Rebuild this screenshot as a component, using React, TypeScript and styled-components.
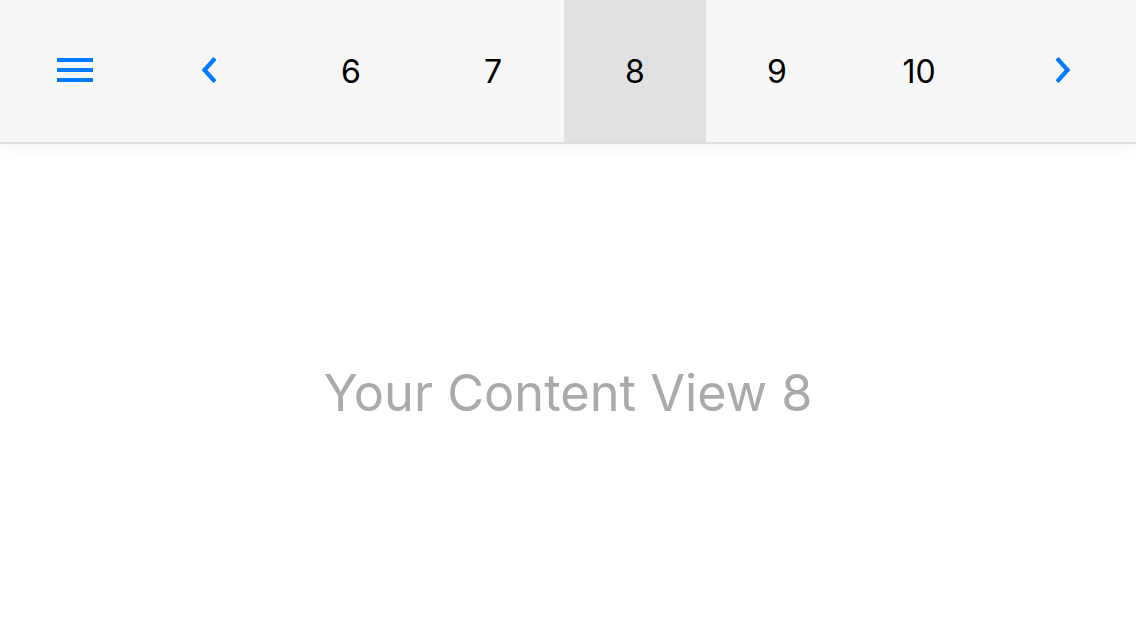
import React from "react";
import styled, { createGlobalStyle } from "styled-components";

const GlobalStyle = createGlobalStyle`
  html, body { margin: 0; padding: 0; background: #ffffff; }
  body { font-family: Inter, "Liberation Sans", Arial, sans-serif; }
  #root { height: 640px; }
`;

const Page = styled.div`
  height: 640px;
  display: flex;
  flex-direction: column;
  background: #ffffff;
`;

const Toolbar = styled.nav`
  display: flex;
  height: 142px;
  flex-shrink: 0;
  background: #f7f7f7;
  border-bottom: 2px solid #dedede;
  box-shadow: 0 4px 18px rgba(0, 0, 0, 0.05);
  position: relative;
  z-index: 1;
`;

const MenuCell = styled.button`
  width: 138px;
  display: flex;
  align-items: center;
  padding: 0 0 0 57px;
  border: 0;
  background: transparent;
`;

const Hamburger = styled.span`
  display: flex;
  flex-direction: column;
  gap: 6px;
  width: 36px;
  margin-top: -2px;
  span {
    height: 4px;
    background: #007aff;
  }
`;

const Cell = styled.button<{ $active?: boolean; $grow?: boolean }>`
  width: 142px;
  flex: ${(p) => (p.$grow ? "1" : "0 0 142px")};
  display: flex;
  align-items: center;
  justify-content: center;
  border: 0;
  padding: 0;
  background: ${(p) => (p.$active ? "#e0e1e0" : "transparent")};
  font-family: Inter, "Liberation Sans", Arial, sans-serif;
  font-size: 32px;
  color: #000;
`;

const Content = styled.main`
  flex: 1;
  display: flex;
  align-items: center;
  justify-content: center;
  font-size: 50.5px;
  color: #aaaaaa;
  font-family: Inter, "Liberation Sans", Arial, sans-serif;
`;

const Chevron = ({ dir }: { dir: "left" | "right" }) => (
  <svg width="16" height="26" viewBox="0 0 16 26" style={{ marginTop: "-2px" }}>
    <path
      d={dir === "left" ? "M12.5 3 L3.5 13 L12.5 23" : "M3.5 3 L12.5 13 L3.5 23"}
      fill="none"
      stroke="#007aff"
      strokeWidth="4.2"
      strokeLinecap="square"
    />
  </svg>
);

export default function App() {
  const pages = [6, 7, 8, 9, 10];
  const current = 8;
  return (
    <Page>
      <GlobalStyle />
      <Toolbar>
        <MenuCell aria-label="menu">
          <Hamburger>
            <span />
            <span />
            <span />
          </Hamburger>
        </MenuCell>
        <Cell aria-label="previous">
          <Chevron dir="left" />
        </Cell>
        {pages.map((n) => (
          <Cell key={n} $active={n === current}>
            {n}
          </Cell>
        ))}
        <Cell $grow aria-label="next">
          <Chevron dir="right" />
        </Cell>
      </Toolbar>
      <Content>Your Content View {current}</Content>
    </Page>
  );
}
